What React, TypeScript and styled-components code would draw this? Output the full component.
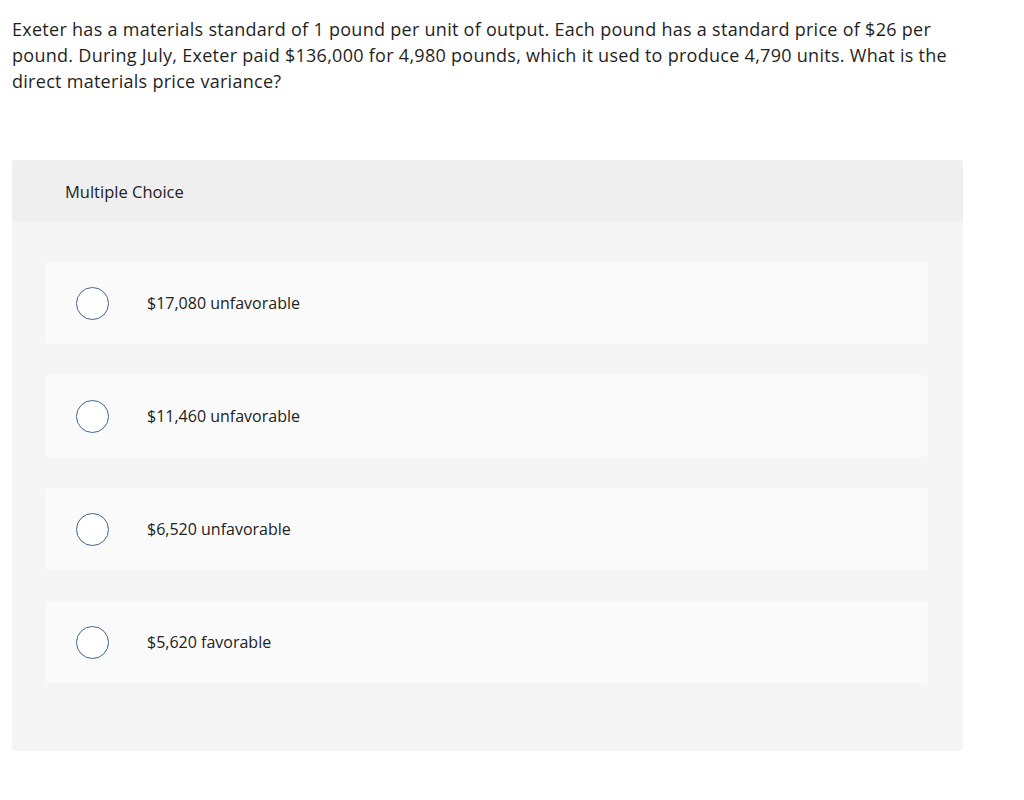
import React from "react";
import styled, { createGlobalStyle } from "styled-components";

const GlobalStyle = createGlobalStyle`
    html, body {
        margin: 0;
        padding: 0;
        background: #ffffff;
    }
    body {
        font-family: "Open Sans", "Liberation Sans", sans-serif;
        color: #222;
    }
`;

const Page = styled.div`
    width: 1024px;
    padding: 16px 49px 0 12px;
    box-sizing: border-box;
`;

const Question = styled.p`
    margin: 0;
    width: 963px;
    font-size: 18px;
    line-height: 26px;
    letter-spacing: 0.28px;
    color: #1f1f1f;
`;

const Card = styled.div`
    margin-top: 66px;
    width: 951px;
    background-color: #f5f5f5;
    border-radius: 3px;
    overflow: hidden;
`;

const Header = styled.div`
    display: flex;
    align-items: center;
    height: 62px;
    padding-left: 53px;
    background-color: #efefef;
    font-size: 16.5px;
    color: #222;
`;

const Options = styled.div`
    display: flex;
    flex-direction: column;
    gap: 31px;
    padding: 40px 35px 68px 33px;
`;

const Option = styled.label`
    display: flex;
    align-items: center;
    height: 82px;
    padding-left: 31px;
    background-color: #fafafa;
    border-radius: 3px;
    cursor: pointer;
`;

const Radio = styled.span`
    flex: 0 0 auto;
    width: 31px;
    height: 31px;
    border: 1.5px solid #3f6593;
    border-radius: 50%;
    background-color: #ffffff;
    margin-right: 38px;
`;

const OptionLabel = styled.span`
    font-size: 16px;
    color: #222;
`;

const choices = [
    "$17,080 unfavorable",
    "$11,460 unfavorable",
    "$6,520 unfavorable",
    "$5,620 favorable",
];

export default function App() {
    return (
        <>
            <GlobalStyle />
            <Page>
                <Question>
                    Exeter has a materials standard of 1 pound per unit of output. Each pound has a
                    standard price of $26 per pound. During July, Exeter paid $136,000 for 4,980
                    pounds, which it used to produce 4,790 units. What is the direct materials price
                    variance?
                </Question>
                <Card>
                    <Header>Multiple Choice</Header>
                    <Options>
                        {choices.map((choice, index) => (
                            <Option key={index}>
                                <Radio />
                                <OptionLabel>{choice}</OptionLabel>
                            </Option>
                        ))}
                    </Options>
                </Card>
            </Page>
        </>
    );
}
